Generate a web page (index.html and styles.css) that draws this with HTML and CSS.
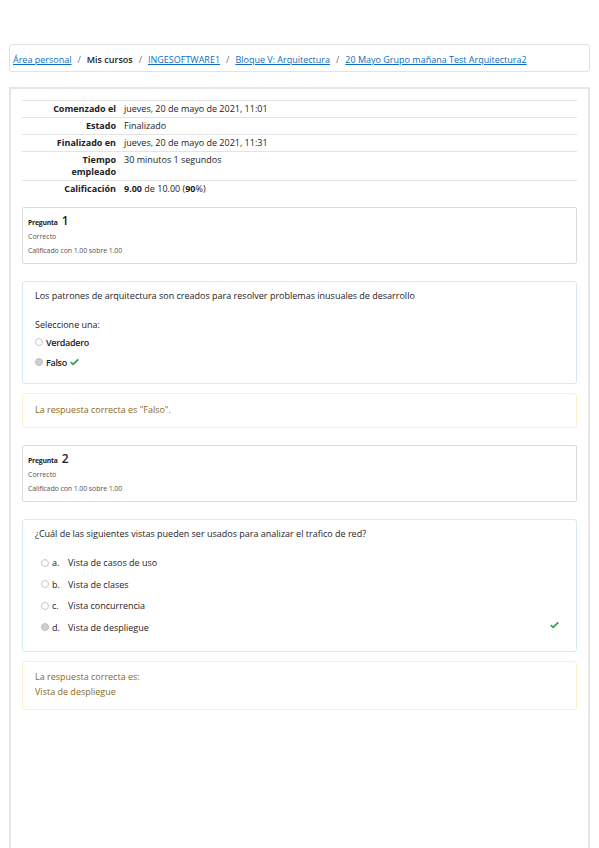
FILE: index.html
```html
<!DOCTYPE html>
<html lang="es">
<head>
<meta charset="utf-8">
<link rel="stylesheet" href="styles.css">
</head>
<body>
<div class="page">
  <nav class="breadcrumb">
    <a href="#">Área personal</a><span class="sep">/</span><span class="plain">Mis cursos</span><span class="sep">/</span><a href="#">INGESOFTWARE1</a><span class="sep">/</span><a href="#">Bloque V: Arquitectura</a><span class="sep">/</span><a href="#">20 Mayo Grupo mañana Test Arquitectura2</a>
  </nav>
  <div class="card">
    <table class="summary">
      <tr><th>Comenzado el</th><td>jueves, 20 de mayo de 2021, 11:01</td></tr>
      <tr><th>Estado</th><td>Finalizado</td></tr>
      <tr><th>Finalizado en</th><td>jueves, 20 de mayo de 2021, 11:31</td></tr>
      <tr><th>Tiempo<br>empleado</th><td>30 minutos 1 segundos</td></tr>
      <tr><th>Calificación</th><td><b>9.00</b> de 10.00 (<b>90</b>%)</td></tr>
    </table>

    <div class="info">
      <div class="qno"><span class="qlabel">Pregunta</span> <span class="qnum">1</span></div>
      <div class="state">Correcto</div>
      <div class="grade">Calificado con 1.00 sobre 1.00</div>
    </div>
    <div class="formulation q1">
      <div class="qtext">Los patrones de arquitectura son creados para resolver problemas inusuales de desarrollo</div>
      <div class="prompt">Seleccione una:</div>
      <div class="opt tf"><span class="radio"></span><span class="otext">Verdadero</span></div>
      <div class="opt tf"><span class="radio checked"></span><span class="otext">Falso</span><svg class="check" viewBox="0 0 12 10" width="9" height="8"><path d="M1 5.2 L4.2 8.2 L11 1.5" fill="none" stroke="#2aa14a" stroke-width="2.2"/></svg></div>
    </div>
    <div class="feedback f1">La respuesta correcta es "Falso".</div>

    <div class="info">
      <div class="qno"><span class="qlabel">Pregunta</span> <span class="qnum">2</span></div>
      <div class="state">Correcto</div>
      <div class="grade">Calificado con 1.00 sobre 1.00</div>
    </div>
    <div class="formulation q2">
      <div class="qtext">¿Cuál de las siguientes vistas pueden ser usados para analizar el trafico de red?</div>
      <div class="opt mc"><span class="radio"></span><span class="letter">a.</span><span class="otext">Vista de casos de uso</span></div>
      <div class="opt mc"><span class="radio"></span><span class="letter">b.</span><span class="otext">Vista de clases</span></div>
      <div class="opt mc"><span class="radio"></span><span class="letter">c.</span><span class="otext">Vista concurrencia</span></div>
      <div class="opt mc last"><span class="radio checked"></span><span class="letter">d.</span><span class="otext">Vista de despliegue</span><svg class="check right" viewBox="0 0 12 10" width="9" height="8"><path d="M1 5.2 L4.2 8.2 L11 1.5" fill="none" stroke="#2aa14a" stroke-width="2.2"/></svg></div>
    </div>
    <div class="feedback f2">La respuesta correcta es:<br>Vista de despliegue</div>
  </div>
</div>
</body>
</html>
```
FILE: styles.css
```css
html, body {
  margin: 0;
  padding: 0;
  background: #ffffff;
  font-family: "Open Sans", "Noto Sans", sans-serif;
  color: #1d2125;
  overflow: hidden;
}
.page {
  padding: 44px 9px 0 9px;
  height: 804px;
  display: flex;
  flex-direction: column;
}
.breadcrumb {
  border: 1px solid #e2e2e2;
  border-radius: 3px;
  display: flex;
  align-items: center;
  padding: 3px 0 0 3px;
  box-sizing: border-box;
  height: 28px;
  font-size: 9px;
  letter-spacing: 0;
  white-space: nowrap;
}
.breadcrumb a {
  color: #0f6cbf;
  text-decoration: underline;
}
.breadcrumb .plain {
  color: #1d2125;
  font-weight: 600;
}
.breadcrumb .sep {
  color: #6a737b;
  padding: 0 6px;
}
.card {
  margin-top: 15px;
  flex: 1;
  border: 2px solid #e6e6e6;
  border-bottom: none;
  padding: 11px 11px 0 11px;
}
.summary {
  width: 100%;
  border-collapse: collapse;
  font-size: 9px;
  letter-spacing: 0;
  margin-bottom: 10px;
}
.summary tr {
  border-top: 1px solid #e4e4e4;
}
.summary th {
  width: 94px;
  text-align: right;
  font-weight: 700;
  padding: 2px 8px 2px 0;
  line-height: 12px;
  vertical-align: top;
}
.summary td {
  padding: 2px 0;
  line-height: 12px;
  vertical-align: top;
}
.info {
  border: 1px solid #dcdcdc;
  border-radius: 2px;
  padding: 3px 6px 4px 5px;
  height: 48px;
  margin-bottom: 17px;
}
.qno {
  line-height: 16px;
}
.qlabel {
  font-size: 6.8px;
  font-weight: 700;
  letter-spacing: -0.2px;
}
.qnum {
  font-size: 12px;
  font-weight: 600;
}
.state {
  font-size: 7px;
  color: #555555;
  line-height: 12px;
}
.grade {
  font-size: 7px;
  color: #555555;
  line-height: 12px;
  margin-top: 2px;
  letter-spacing: -0.1px;
}
.formulation {
  border: 1px solid #d3ecf2;
  border-radius: 3px;
  padding: 8px 12px 8px 12px;
  font-size: 9px;
  letter-spacing: 0;
  margin-bottom: 9px;
}
.q1 {
  height: 85px;
}
.q2 {
  height: 115px;
}
.qtext {
  line-height: 12px;
}
.q1 .qtext {
  margin-bottom: 17px;
}
.q2 .qtext {
  margin-bottom: 12px;
}
.prompt {
  line-height: 12px;
  margin-bottom: 1px;
}
.opt {
  display: flex;
  align-items: center;
  height: 21.5px;
}
.tf {
  height: 20px;
}
.radio {
  width: 6px;
  height: 6px;
  border: 1px solid #c8c8c8;
  border-radius: 50%;
  background: #fff;
  margin-right: 3px;
  box-sizing: content-box;
}
.radio.checked {
  background: #cfcfcf;
  border-color: #c0c0c0;
}
.tf .otext {
  font-weight: 600;
  letter-spacing: -0.3px;
}
.mc .radio {
  margin-left: 6px;
  margin-right: 3px;
}
.letter {
  width: 16px;
}
.check {
  margin-left: 3px;
}
.check.right {
  margin-left: auto;
  margin-right: 5px;
  margin-bottom: 4px;
}
.feedback {
  border: 1px solid #fcefce;
  border-radius: 3px;
  color: #8c6a14;
  font-size: 9px;
  letter-spacing: 0;
  line-height: 15px;
  padding: 8px 12px;
  margin-bottom: 17px;
}
.f1 {
  height: 17px;
}
.f2 {
  padding: 7px 12px 1px 12px;
  height: 39px;
}
```
